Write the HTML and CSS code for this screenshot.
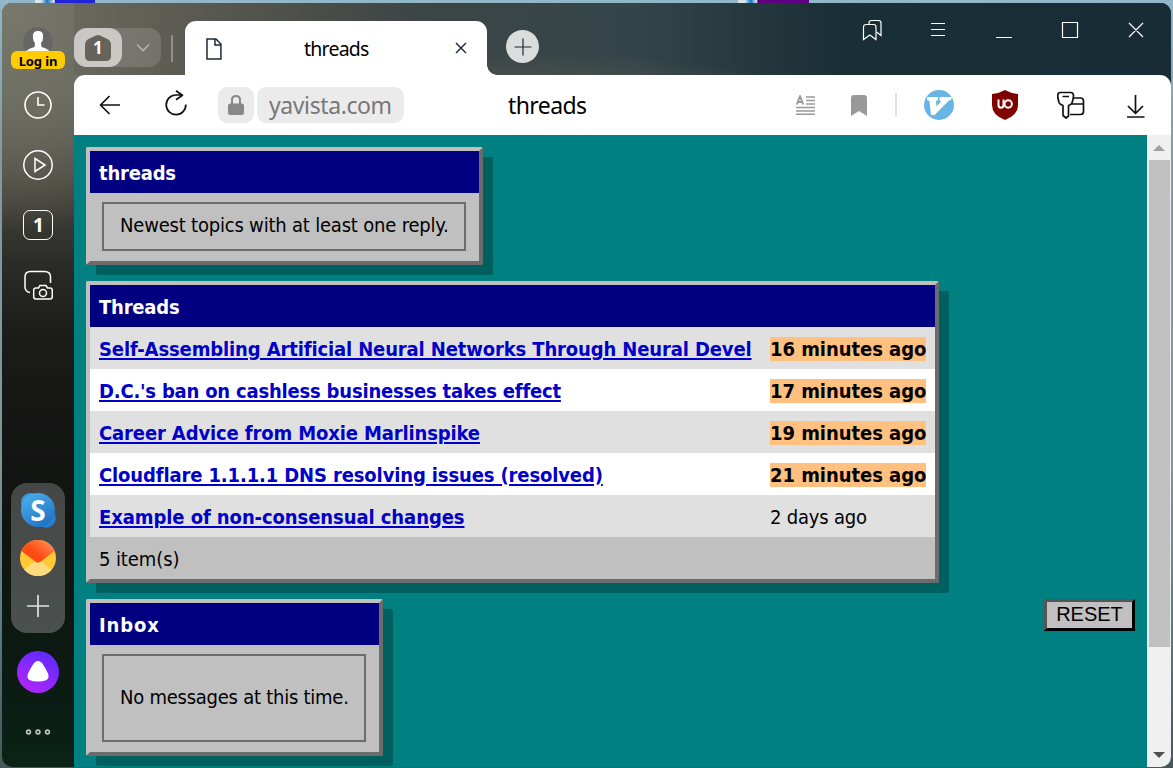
FILE: index.html
```html
<!DOCTYPE html>
<html lang="en">
<head>
<meta charset="utf-8">
<title>threads</title>
<link rel="stylesheet" href="styles.css">
</head>
<body>
<i class="desktop-icon blue"></i><i class="desktop-icon purple"></i>
<div class="window">
  <aside class="sidebar">
    <div class="profile">
      <svg width="30" height="30" viewBox="0 0 30 30"><defs><clipPath id="round"><circle cx="15" cy="15" r="15"/></clipPath></defs><g clip-path="url(#round)"><circle cx="15" cy="15" r="15" fill="#666"/><path d="M15 4q6 0 5 7 0 3-2 5l.5 4q5 1 8 4v7H3v-7q4-3 8.500-4l.5-4q-2-2-2-5-1-7 5-7Z" fill="#fff"/></g></svg>
      <span class="login">Log in</span>
    </div>
    <svg class="side-icon clock" width="30" height="30" viewBox="0 0 30 30"><circle cx="15" cy="15" r="13"/><path d="M15 7v8h6.500" /></svg>
    <svg class="side-icon" width="30" height="30" viewBox="0 0 30 30"><circle cx="15" cy="15" r="14.200"/><path d="M12 8.500v13L22 15Z"/></svg>
    <span class="side-icon count">1</span>
    <svg class="side-icon shot" width="30" height="30" viewBox="0 0 30 30"><path d="M7 22.500Q2 21.500 2 17V7q0-5.500 5.500-5.500h14Q27.500 1.500 27.500 7v6"/><path d="M13 18h2.500l1.500-2.500h6l1.500 2.500H27q2.300 0 2.300 2.200v6.600q0 2.200-2.300 2.200H13q-2.300 0-2.300-2.200v-6.600Q10.700 18 13 18Z"/><circle cx="20" cy="23" r="3.500"/></svg>
    <div class="services">
      <svg width="38" height="38" viewBox="0 0 38 38"><defs><linearGradient id="sky" x2=".6" y2="1"><stop stop-color="#4db5ed"/><stop offset="1" stop-color="#2373c5"/></linearGradient></defs><circle cx="11.500" cy="11.500" r="9.500" fill="#3b9bdf"/><circle cx="27" cy="27" r="9.800" fill="#2d7fcb"/><circle cx="19" cy="19" r="17" fill="url(#sky)"/></svg>
      <b class="skype">S</b>
      <svg class="mail" width="36" height="36" viewBox="0 0 36 36"><defs><clipPath id="mailclip"><circle cx="18" cy="18" r="18"/></clipPath><linearGradient id="flap" x1="1" x2="0" y2=".8"><stop stop-color="#ff9b60"/><stop offset=".65" stop-color="#ff4a13"/></linearGradient></defs><g clip-path="url(#mailclip)"><path fill="#ffc934" d="M0 0h36v36H0z"/><path fill="#ffdb7d" d="M0 33 18 19l18 14v3H0z"/><path fill="url(#flap)" d="M0 0h36v10L20 22q-2 1.500-4 0L0 10z"/></g></svg>
      <svg class="add" width="24" height="24" viewBox="0 0 24 24"><path d="M12 1v22M1 12h22" stroke="#e0e3e2" stroke-width="1.700"/></svg>
    </div>
    <svg class="alice" width="42" height="42" viewBox="0 0 42 42"><defs><linearGradient id="al" x1=".2" y1="1" x2=".8" y2="0"><stop stop-color="#b426f8"/><stop offset="1" stop-color="#5b2aff"/></linearGradient></defs><circle cx="21" cy="21" r="21" fill="url(#al)"/><path fill="#fff" d="M21 10q3 0 5 3.500 3 4.500 5 9 1.500 5-1.500 6.500-3 1.500-8.500 1.500T12.500 29Q9.500 27.500 11 22.500q2-4.500 5-9Q18 10 21 10Z"/></svg>
    <svg class="more" width="26" height="8" viewBox="0 0 26 8" fill="none" stroke="#bcc5c0" stroke-width="1.600"><circle cx="3.500" cy="4" r="1.900"/><circle cx="13" cy="4" r="1.900"/><circle cx="22.500" cy="4" r="1.900"/></svg>
  </aside>
  <main class="browser">
    <header class="tabs">
      <div class="group"><span class="home"><svg width="28" height="28" viewBox="0 0 28 28"><path fill="#66645a" d="M12 1.500q2-1 4 0l8 3.800q3 1.700 3 4.700v12q0 5-5 5H6q-5 0-5-5V10q0-3 3-4.700Z"/></svg><b>1</b></span><svg class="chev" width="14" height="9" viewBox="0 0 14 9"><path d="m1 1.500 6 6 6-6" fill="none" stroke="#b2b1ab" stroke-width="1.700"/></svg></div>
      <i class="divider"></i>
      <div class="tab">
        <svg width="16" height="22" viewBox="0 0 16 22" fill="none" stroke="#1d2733" stroke-width="1.500"><path d="M1 1h9l5 5v15H1ZM9 1v6h6"/></svg>
        <span class="tab-name">threads</span>
        <svg class="tab-close" width="12" height="12" viewBox="0 0 12 12"><path d="m1 1 10 10M11 1 1 11" stroke="#222b3b" stroke-width="1.500"/></svg>
      </div>
      <span class="newtab"><svg width="18" height="18" viewBox="0 0 18 18"><path d="M9 .5v17M.5 9h17" stroke="#1d2733" stroke-width="1.200"/></svg></span>
      <svg class="win-icons" width="290" height="30" viewBox="0 0 290 30" fill="none" stroke="#fff" stroke-width="1.200"><path d="M9 5.700V4q0-2.500 2.500-2.500h7Q21 1.500 21 4v12.500L16.500 13"/><path d="M3.500 20.500V8q0-2.500 2.500-2.500h7.500Q16 5.500 16 8v12.500l-6.200-4.500Z"/><path d="M71 4.500h14M71 10.500h14M71 16.500h14M136 18.500h16M202.500 3.500h15v15h-15ZM269 4l14 14M283 4l-14 14"/></svg>
    </header>
    <nav class="toolbar">
      <svg class="back" width="22" height="20" viewBox="0 0 22 20"><path d="M21 10H1.500M10.500 1l-9 9 9 9"/></svg>
      <svg class="reload" width="22" height="26" viewBox="0 0 22 26"><path d="M20.800 14.500A9.800 9.800 0 1 1 11 5h6.500M11 .7l6.500 4.500-6.500 4.600"/></svg>
      <span class="lock"><svg width="16" height="20" viewBox="0 0 16 20"><path d="M4 9V5q0-4 4-4t4 4v4" fill="none" stroke="#888" stroke-width="2"/><rect y="8.500" width="16" height="11.500" rx="2.500" fill="#888"/></svg></span>
      <span class="url">yavista.com</span>
      <span class="page-title">threads</span>
      <svg class="reader" width="19" height="20" viewBox="0 0 19 20" stroke="#999"><path d="M10 2h9M10 5.500h9M10 9h9M0 12.500h19M0 16h19M0 19.300h19" stroke-width="1.400"/><path d="M.8 9.500 4 1l3.200 8.500M2 7h4" fill="none" stroke-width="1.900"/></svg>
      <svg class="mark" width="16" height="21" viewBox="0 0 16 21"><path fill="#999" d="M3 0h10q3 0 3 3v18l-8-5-8 5V3q0-3 3-3Z"/></svg>
      <i class="bar-sep"></i>
      <svg class="vim" width="30" height="30" viewBox="0 0 30 30"><circle cx="15" cy="15" r="15" fill="#68b4e4"/><path fill="#fff" d="M3 7h11v3l-2 1 .5 5.500 4.500-5-1.500-1.500V7H28l-1 3-2 .5L10.500 25H7L5.500 11 3 10Z"/></svg>
      <svg class="shield" width="26" height="30" viewBox="0 0 26 30"><path d="M13 0Q19 3.500 26 4v11q0 10-13 15Q0 25 0 15V4q7-.5 13-4Z" fill="#800000"/><path d="M6.500 9.500v5.500q0 2.800 2.500 2.800t2.500-2.800V9.500" fill="none" stroke="#fff" stroke-width="2"/><circle cx="16.200" cy="14" r="3.700" fill="none" stroke="#fff" stroke-width="2"/></svg>
      <svg class="key" width="28" height="28" viewBox="0 0 28 28"><path d="M16 7h7.500q3 0 3 3v10.500q0 3-3 3H13M15 13h11.500"/><path d="M3.500 1.500h10q3 0 3 3c0 3-1 6-1.500 7.500q-.5 1.500-3.500 2.500v10.500l-2.500 2-3-2.500V14.500C3 13.500 2.500 13 2 11.500 1 8 .7 6 .7 4.500q0-3 2.800-3ZM5.500 5.500h6.500"/></svg>
      <svg class="download" width="20" height="24" viewBox="0 0 20 24"><path d="M9.500 1v18M2 12l7.500 7.500L17 12M1 23h17.500"/></svg>
    </nav>
    <div class="viewport">
      <div class="page">
        <section class="panel intro"><h2>threads</h2><p class="notice">Newest topics with at least one reply.</p></section>
        <section class="panel list"><h2>Threads</h2>
          <div class="row"><a class="long">Self-Assembling Artificial Neural Networks Through Neural Devel</a><mark>16 minutes ago</mark></div>
          <div class="row"><a class="dense">D.C.'s ban on cashless businesses takes effect</a><mark>17 minutes ago</mark></div>
          <div class="row"><a>Career Advice from Moxie Marlinspike</a><mark>19 minutes ago</mark></div>
          <div class="row"><a>Cloudflare 1.1.1.1 DNS resolving issues (resolved)</a><mark>21 minutes ago</mark></div>
          <div class="row"><a class="loose">Example of non-consensual changes</a><span>2 days ago</span></div>
          <div class="row total"><span>5 item(s)</span></div>
        </section>
        <div class="bottom"><section class="panel inbox"><h2>Inbox</h2><p class="notice">No messages at this time.</p></section><button class="reset">RESET</button></div>
      </div>
      <div class="scrollbar"><i class="up"></i><i class="thumb"></i><i class="down"></i></div>
    </div>
  </main>
</div>
</body>
</html>
```
FILE: styles.css
```css
*{box-sizing:border-box}
body{margin:0;width:1173px;height:768px;overflow:hidden;padding:3px 2px 1px;background:linear-gradient(#92b7c8 0,#8299a3 20%,#819499 60%,#5b7c86 80%,#46565a);font-family:"DejaVu Sans Condensed","DejaVu Sans",sans-serif;color:#000}
.desktop-icon{position:absolute;top:0;height:3px;width:40px}
.blue{left:35px;width:60px;background:linear-gradient(90deg,#dde4e9 10%,#1379c8 20%,#dde4e9 32%,#2222d8 34%)}
.purple{left:738px;width:71px;background:linear-gradient(90deg,#dde4e9 10%,#1379c8 18%,#dde4e9 26%,#600080 28%)}
.window{position:relative;width:1169px;height:764px;display:flex;border-radius:10px;overflow:hidden;background:linear-gradient(90deg,#77756a 0,#66655b 16%,#424844 34%,#303f42 55%,#1a2e35 73%,#182c35)}
.sidebar{width:72px;display:flex;flex-direction:column;align-items:center;background:radial-gradient(circle at 0 0,#79786c 0,#717065 80px,#71706500 230px),linear-gradient(#69685e 0,#626157 90px,#48473f 180px,#2b2c28 260px,#1c1c1a 330px,#141514 430px,#101411 540px,#0b1b13 680px,#0a2317)}
.profile{height:46px;margin-top:24px;display:flex;flex-direction:column;align-items:center}
.login{margin-top:-6px;width:54px;height:18px;border-radius:6px;background:#fc0;font:700 13px/21px "Noto Sans",sans-serif;letter-spacing:-.1px;text-align:center;position:relative}
.side-icon{margin-top:17px;flex:none;fill:none;stroke:#fff;stroke-width:1.500}
.side-icon + .side-icon{margin-top:30px}
.clock{stroke-width:1.600}
.count{width:30px;height:30px;border:1.500px solid #fff;border-radius:7px;color:#fff;font:700 19px/29px "Open Sans",sans-serif;text-align:center;padding-left:1px}
.services{width:54px;height:150px;margin-top:183px;border-radius:16px;background:linear-gradient(#444746,#4b514f);display:flex;flex-direction:column;align-items:center;padding-top:8px;flex:none}
.services svg{flex:none}
.skype{height:0;color:#fff;font:700 28px/38px "Open Sans",sans-serif;position:relative;top:-38px;line-height:38px}
.mail{margin-top:11px}
.add{margin-top:18px}
.alice{margin-top:18px;flex:none}
.more{margin-top:35px;flex:none}
.browser{width:1097px;display:flex;flex-direction:column}
.tabs{height:72px;display:flex;flex:none;background:radial-gradient(ellipse at 400px 110px,#5b5b50 0,#5b5b50bb 120px,#5b5b5000 390px),linear-gradient(90deg,#69685e 0,#54554d 15%,#3d4545 31%,#34454a 51%,#1a2e35 70%,#182c35)}
.group{width:87px;height:39px;margin-top:25px;border-radius:12px;background:#ffffff22;display:flex;align-items:center}
.home{width:48px;height:39px;border-radius:13px;background:#cac8c4;display:flex;align-items:center;justify-content:center;padding-left:9px}
.home svg{flex:none}
.home b{width:9px;position:relative;left:-19px;color:#fff;font:700 17px/20px "Open Sans",sans-serif}
.chev{margin-left:14px}
.divider{width:2px;height:27px;margin:32px 12px 0 10px;background:#918f87}
.tab{width:302px;height:54px;margin-top:18px;border-radius:11px 11px 0 0;background:#fff;display:flex;align-items:center;padding:1px 20px 0 21px;position:relative}
.tab:after{content:"";position:absolute;left:302px;bottom:0;width:10px;height:10px;background:radial-gradient(circle at 100% 0,transparent 9.500px,#fff 10px)}
.tab-name{font:19.500px/26px "Noto Sans",sans-serif;letter-spacing:-.75px;margin-left:82px;width:152px}
.tab-close{margin-top:-1px}
.newtab{width:33px;height:33px;margin:27px 0 0 19px;border-radius:50%;background:#dadddc;display:flex;align-items:center;justify-content:center;flex:none}
.win-icons{margin:16px 21px 0 auto;width:290px;flex:none}
.toolbar{height:60px;flex:none;border-radius:11px 11px 0 0;background:#fff;display:flex;align-items:center}
.toolbar svg{flex:none;fill:none;stroke-linejoin:round}
.back,.reload,.key,.download{stroke:#111;stroke-width:1.700}
.back{margin-left:25px}
.reload{margin-left:44px;margin-top:-4px}
.key path{fill:#fff}
.lock{margin-left:31px;width:36px;height:36px;border-radius:9px;background:#ebebeb;display:flex;align-items:center;justify-content:center}
.url{margin-left:3px;width:147px;height:36px;border-radius:9px;background:#ebebeb;color:#777;font:23px/37px "Noto Sans",sans-serif;letter-spacing:-.4px;padding-left:12px}
.page-title{padding-left:104px;font:23px/37px "Noto Sans",sans-serif;letter-spacing:-.6px;flex:1}
.mark{margin-left:36px}
.bar-sep{width:2px;height:24px;background:#e2e2e2;margin:0 27px 0 28px}
.shield{margin-left:38px}
.key{margin-left:39px}
.download{margin:2px 25px 0 41px}
.viewport{display:flex;flex:1;min-height:0}
.page{width:1073px;background:#008080;padding:12px;font-size:20px;letter-spacing:-.2px;overflow:hidden;display:flex;flex-direction:column;align-items:flex-start}
.panel{border:4px solid;border-color:#c0c0c0 #6c6c6c #6c6c6c #c0c0c0;background:#c0c0c0;border-radius:2px;box-shadow:10px 10px 0 #006060;flex:none}
.panel h2{margin:0;padding-left:9px;height:42px;background:navy;color:#fff;font-size:20px;line-height:44px;letter-spacing:-.2px}
.intro{width:397px;height:118px}
.notice{margin:9px 13px 0 12px;height:49px;border:2px solid #6c6c6c;padding-left:16px;line-height:43px;white-space:nowrap}
.list{width:853px;height:302px;margin-top:16px}
.row{height:42px;display:grid;grid-template-columns:671px 1fr;align-items:center;padding:1px 0 0 9px;white-space:nowrap;line-height:24px}
.row:nth-of-type(odd){background:#e0e0e0}
.row:nth-of-type(even){background:#fff}
.row.total{background:#c0c0c0;letter-spacing:-.1px}
.row a{font-weight:700;color:#0000c8;text-decoration:underline;text-decoration-thickness:2px;text-underline-offset:2px;justify-self:start;letter-spacing:-.13px}
.row .dense{letter-spacing:-.2px}
.row .loose{letter-spacing:-.08px}
.row mark{width:156px;background:#ffc080;color:#000;font-weight:700;letter-spacing:-.05px}
.bottom{display:flex;width:100%;margin-top:16px;justify-content:space-between;align-items:flex-start}
.inbox{width:297px;height:157px}
.inbox h2{letter-spacing:.9px}
.inbox .notice{height:88px;line-height:83px;letter-spacing:-.25px}
.reset{width:91px;height:32px;border:3px solid;border-color:#555 #000 #000 #555;background:#c0c0c0;color:#000;font:20px/22px "Liberation Sans",sans-serif;padding:0 0 3px}
.scrollbar{width:24px;background:#f0f0f0;display:flex;flex-direction:column;align-items:center;padding-top:10px}
.up{border:6px solid transparent;border-top:0;border-bottom-color:#a0a0a0}
.thumb{width:21px;height:487px;background:#c0c0c0;margin-top:9px}
.down{border:6px solid transparent;border-bottom:0;border-top-color:#505050;margin-top:105px}
```
